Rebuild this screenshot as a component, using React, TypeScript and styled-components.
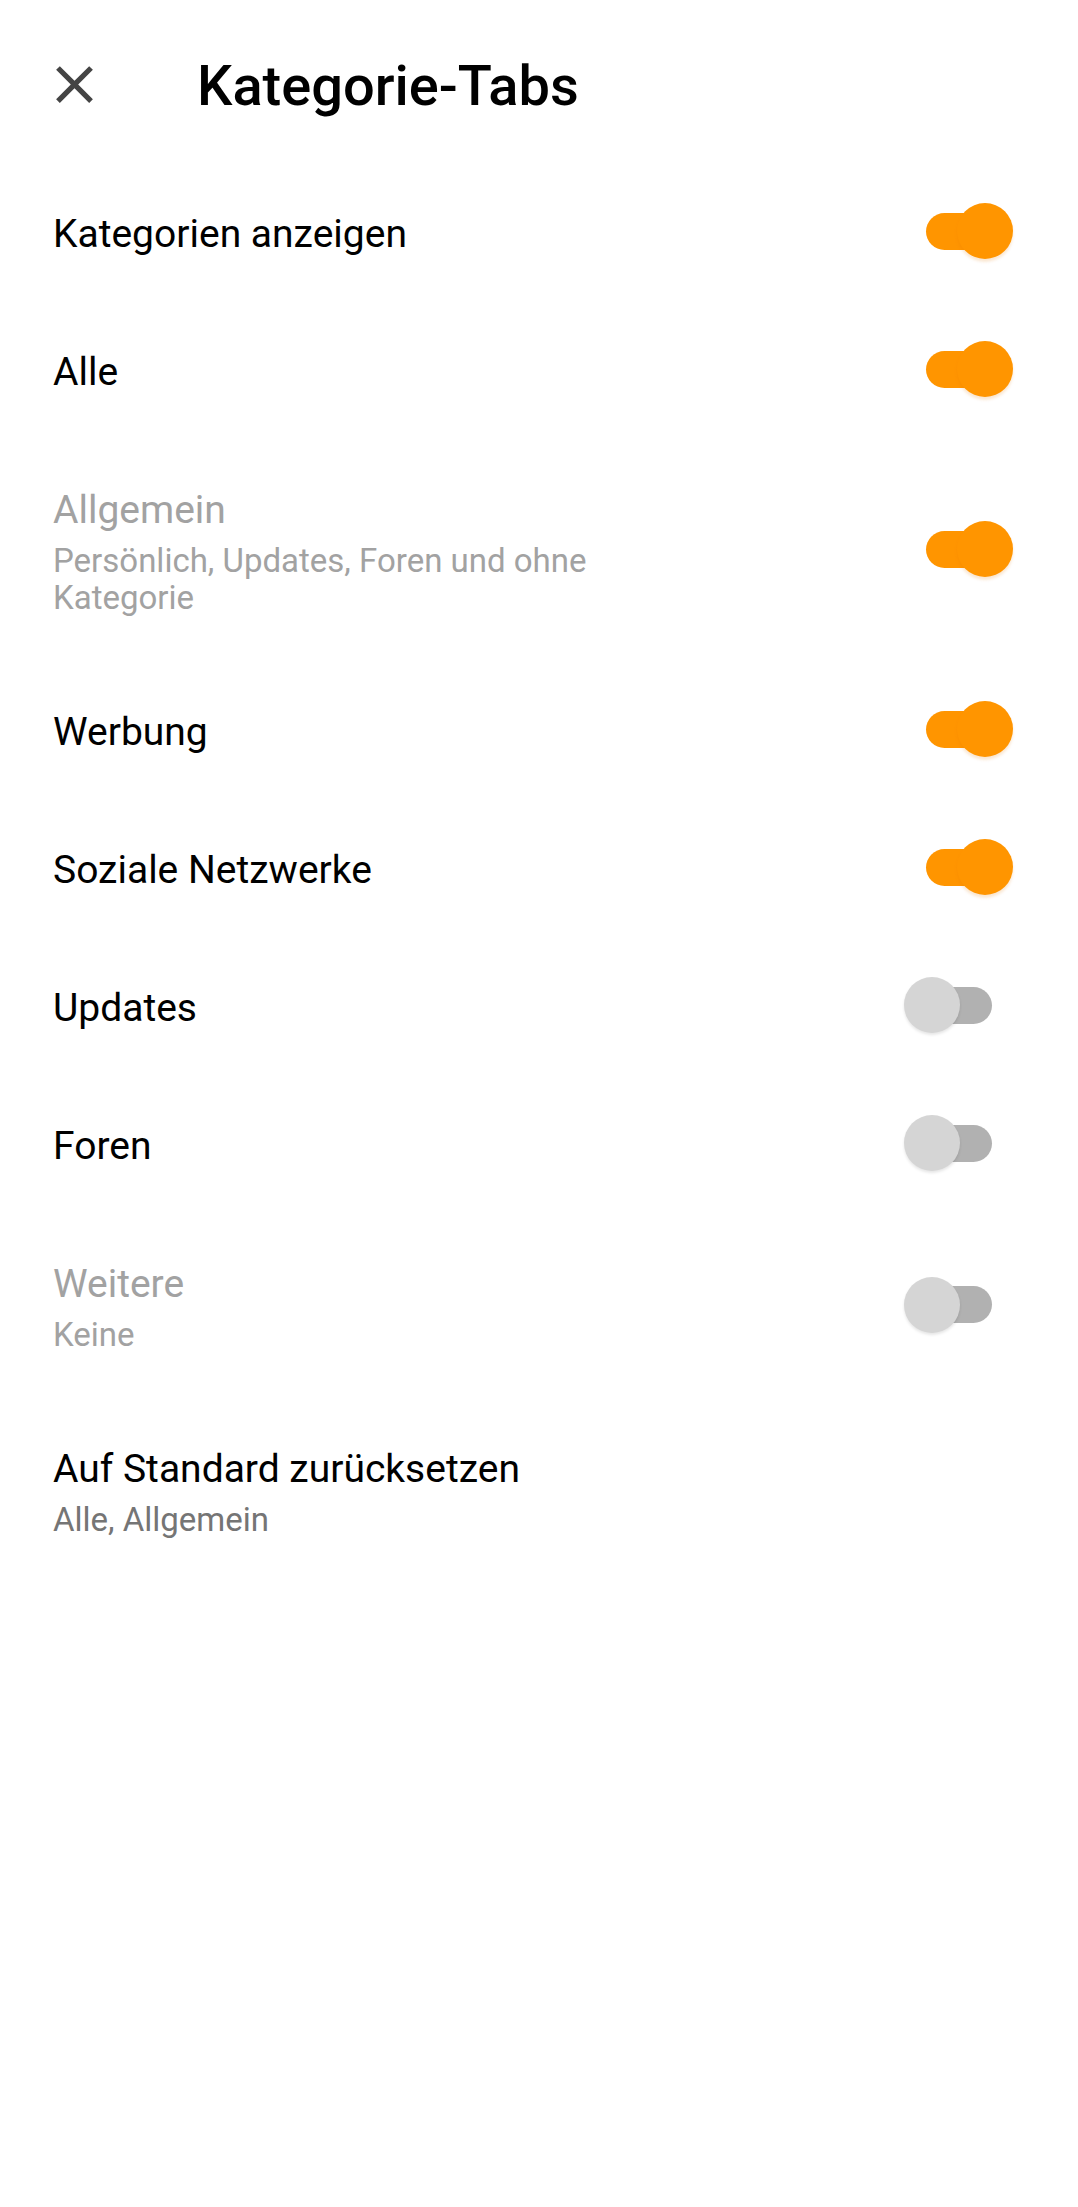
import styled, { createGlobalStyle } from 'styled-components';

const GlobalStyle = createGlobalStyle`
  *, *::after, *::before {
    box-sizing: border-box;
  }
  body {
    margin: 0;
    background: #ffffff;
    font-family: Roboto, "Noto Sans", "Liberation Sans", sans-serif;
  }
`;

type Setting = {
  id: string;
  title: string;
  summary?: string;
  disabled?: boolean;
  checked?: boolean;
};

const settings: Setting[] = [
  { id: 'show', title: 'Kategorien anzeigen', checked: true },
  { id: 'all', title: 'Alle', checked: true },
  {
    id: 'general',
    title: 'Allgemein',
    summary: 'Persönlich, Updates, Foren und ohne Kategorie',
    disabled: true,
    checked: true,
  },
  { id: 'ads', title: 'Werbung', checked: true },
  { id: 'social', title: 'Soziale Netzwerke', checked: true },
  { id: 'updates', title: 'Updates', checked: false },
  { id: 'forums', title: 'Foren', checked: false },
  { id: 'more', title: 'Weitere', summary: 'Keine', disabled: true, checked: false },
];

function CloseIcon() {
  return (
    <svg width="63" height="63" viewBox="0 0 24 24" aria-hidden="true">
      <path
        fill="#444444"
        d="M19 6.41L17.59 5 12 10.59 6.41 5 5 6.41 10.59 12 5 17.59 6.41 19 12 13.41 17.59 19 19 17.59 13.41 12z"
      />
    </svg>
  );
}

function App() {
  return (
    <>
      <GlobalStyle />
      <Screen>
        <Toolbar>
          <CloseButton aria-label="Schließen">
            <CloseIcon />
          </CloseButton>
          <Title>Kategorie-Tabs</Title>
        </Toolbar>
        <List>
          {settings.map((item) => (
            <Row key={item.id}>
              <TextBlock>
                <RowTitle $disabled={item.disabled}>{item.title}</RowTitle>
                {item.summary && (
                  <Summary $disabled={item.disabled}>{item.summary}</Summary>
                )}
              </TextBlock>
              <Switch $on={!!item.checked}>
                <Thumb $on={!!item.checked} />
              </Switch>
            </Row>
          ))}
          <Row>
            <TextBlock>
              <RowTitle>Auf Standard zurücksetzen</RowTitle>
              <Summary>Alle, Allgemein</Summary>
            </TextBlock>
          </Row>
        </List>
      </Screen>
    </>
  );
}

export default App;

const Screen = styled.div`
  width: 1078px;
  min-height: 2207px;
  background: #ffffff;
`;

const Toolbar = styled.header`
  height: 162px;
  display: flex;
  align-items: flex-start;
  padding: 53px 0 0 43px;
`;

const CloseButton = styled.button`
  width: 63px;
  height: 63px;
  padding: 0;
  border: 0;
  background: none;
  display: flex;
  align-items: center;
  justify-content: center;
`;

const Title = styled.h1`
  margin: 0 0 0 91px;
  height: 63px;
  line-height: 66px;
  font-size: 56px;
  font-weight: 500;
  color: #000000;
`;

const List = styled.div`
  display: flex;
  flex-direction: column;
`;

const Row = styled.div`
  min-height: 138px;
  padding: 50px 86px 44px 53px;
  display: flex;
  align-items: center;
  justify-content: space-between;
`;

const TextBlock = styled.div`
  flex: 1;
  max-width: 600px;
  display: flex;
  flex-direction: column;
`;

const RowTitle = styled.div<{ $disabled?: boolean }>`
  font-size: 39px;
  line-height: 44px;
  color: ${(p) => (p.$disabled ? '#a2a2a2' : '#000000')};
`;

const Summary = styled.div<{ $disabled?: boolean }>`
  margin-top: 10px;
  font-size: 33px;
  line-height: 37px;
  color: ${(p) => (p.$disabled ? '#a2a2a2' : '#757575')};
`;

const Switch = styled.span<{ $on: boolean }>`
  position: relative;
  flex: none;
  width: 66px;
  height: 37px;
  margin-top: -6px;
  border-radius: 19px;
  background: ${(p) => (p.$on ? '#ff9500' : '#b1b1b1')};
`;

const Thumb = styled.span<{ $on: boolean }>`
  position: absolute;
  top: -9.5px;
  left: ${(p) => (p.$on ? '31px' : '-22px')};
  width: 56px;
  height: 56px;
  border-radius: 50%;
  background: ${(p) => (p.$on ? '#ff9500' : '#d5d5d5')};
  box-shadow: ${(p) =>
    p.$on ? '0 3px 3px rgba(230, 120, 0, 0.18)' : '0 2px 3px rgba(0, 0, 0, 0.1)'};
`;
